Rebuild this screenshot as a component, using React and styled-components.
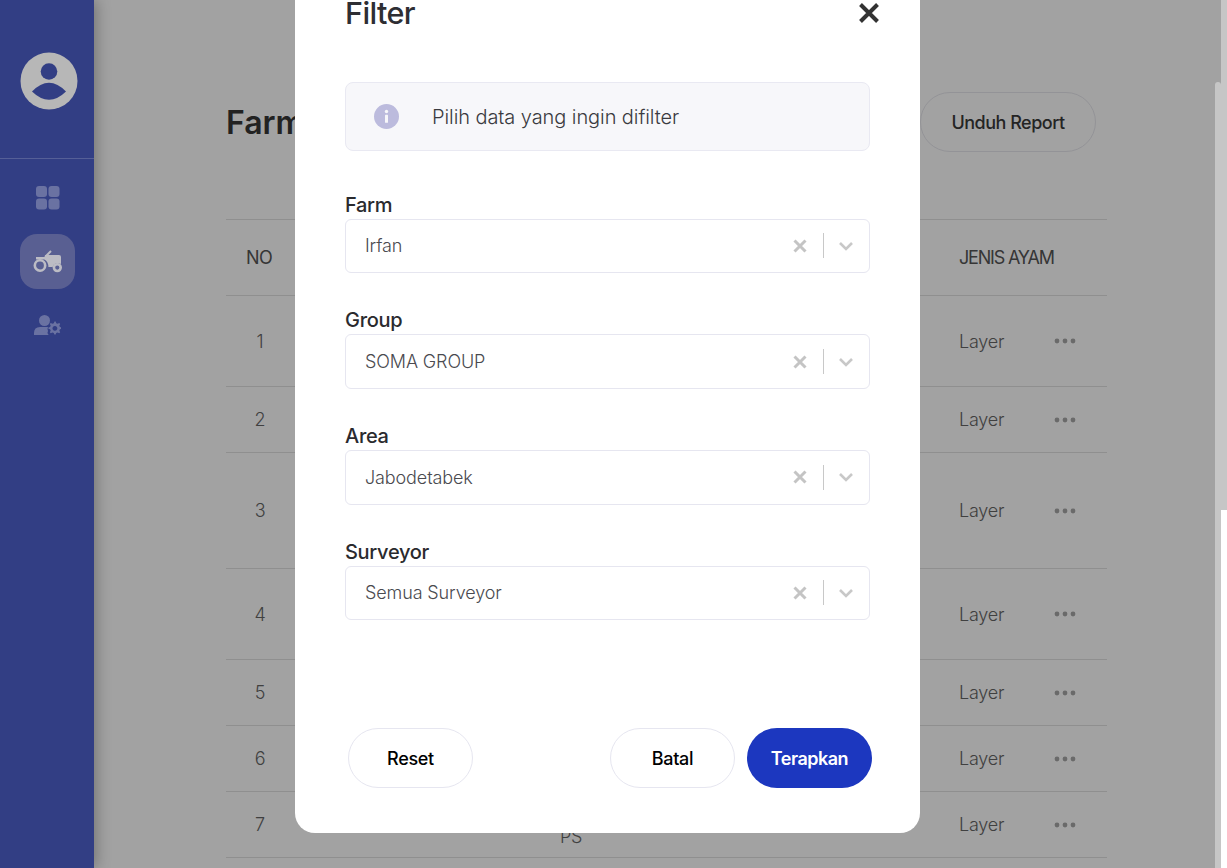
import React from 'react';
import styled, { createGlobalStyle } from 'styled-components';

const FONT = "Inter, 'Noto Sans', sans-serif";

const GlobalStyle = createGlobalStyle`
  html, body {
    margin: 0;
    height: 100%;
    overflow: hidden;
    background: #fff;
    font-family: ${FONT};
  }
  * { box-sizing: border-box; }
`;

const Page = styled.div`
  display: flex;
  height: 868px;
  overflow: hidden;
`;

const Sidebar = styled.aside`
  position: relative;
  z-index: 3;
  flex: 0 0 94px;
  background: #323e84;
  box-shadow: 2px 0 14px rgba(0, 0, 0, 0.3);
`;

const SideTop = styled.div`
  height: 159px;
  padding: 52px 0 0 4px;
  display: flex;
  justify-content: center;
  border-bottom: 1px solid #555f97;
`;

const SideNav = styled.nav`
  display: flex;
  flex-direction: column;
  align-items: center;
  padding-top: 11px;
  gap: 9px;
`;

const NavItem = styled.div`
  width: 55px;
  height: 55px;
  margin-left: 1px;
  border-radius: 17px;
  display: flex;
  align-items: center;
  justify-content: center;
  background: ${(p) => (p.$active ? '#595f92' : 'transparent')};
`;

const Main = styled.main`
  flex: 1;
  padding: 92px 120px 0 132px;
`;

const Head = styled.div`
  display: flex;
  align-items: center;
  justify-content: space-between;
  padding-right: 11px;
  margin-bottom: 67px;
`;

const Title = styled.h1`
  margin: 0;
  font-size: 32px;
  font-weight: 600;
  color: #363636;
`;

const ReportButton = styled.button`
  width: 176px;
  height: 60px;
  border-radius: 30px;
  border: 1px solid #e8e8ee;
  background: transparent;
  font-family: ${FONT};
  font-size: 18px;
  font-weight: 500;
  letter-spacing: -0.5px;
  color: #3a3a3a;
`;

const Table = styled.div`
  border-top: 1px solid #e2e2e2;
`;

const Row = styled.div`
  display: grid;
  grid-template-columns: 314px 399px 95px 1fr;
  align-items: center;
  height: ${(p) => p.$height}px;
  padding-left: 20px;
  border-bottom: 1px solid #e2e2e2;
  font-size: 18px;
  font-weight: 300;
  letter-spacing: -0.2px;
  color: #666;
`;

const HeadCell = styled.div`
  font-size: 18px;
  font-weight: 400;
  letter-spacing: ${(p) => (p.$tight ? '-1.2px' : '-0.5px')};
  color: #555;
  white-space: nowrap;
`;

const Cell = styled.div`
  padding-top: ${(p) => p.$lineOffset || 0}px;
`;

const NumberCell = styled.div`
  width: 28px;
  text-align: center;
`;

const ActionCell = styled.div`
  display: flex;
  align-items: center;
`;

const Backdrop = styled.div`
  position: fixed;
  top: 0;
  left: 0;
  right: 6px;
  bottom: 0;
  z-index: 2;
  background: rgba(0, 0, 0, 0.365);
`;

const Modal = styled.div`
  position: fixed;
  z-index: 4;
  top: -40px;
  left: 295px;
  width: 625px;
  height: 873px;
  padding: 33px 50px 45px;
  display: flex;
  flex-direction: column;
  background: #fff;
  border-radius: 20px;
`;

const ModalHead = styled.div`
  display: flex;
  align-items: center;
  justify-content: space-between;
  height: 40px;
  margin-bottom: 49px;
`;

const ModalTitle = styled.h2`
  margin: 0;
  font-size: 30.5px;
  line-height: 26px;
  font-weight: 500;
  letter-spacing: -0.6px;
  color: #2e2e33;
`;

const CloseIcon = styled.svg`
  width: 22px;
  height: 22px;
  margin-right: -10px;
`;

const InfoBox = styled.div`
  display: flex;
  align-items: center;
  height: 69px;
  padding-left: 28px;
  gap: 33px;
  margin-bottom: 41.6px;
  background: #f7f7fa;
  border: 1px solid #e9e9f2;
  border-radius: 8px;
  font-size: 20px;
  font-weight: 300;
  letter-spacing: -0.08px;
  color: #3a3a40;
`;

const Fields = styled.div`
  display: flex;
  flex-direction: column;
  gap: 35.1px;
`;

const Field = styled.div`
  display: flex;
  flex-direction: column;
  gap: 2px;
`;

const Label = styled.label`
  font-size: 20px;
  line-height: 24px;
  font-weight: 500;
  letter-spacing: -0.3px;
  color: #2a2a2e;
`;

const Select = styled.div`
  display: flex;
  align-items: center;
  height: 54.6px;
  padding: 0 15px 0 19px;
  border: 1px solid #e6e6f0;
  border-radius: 6px;
  font-size: 18px;
  font-weight: 300;
  letter-spacing: -0.12px;
  color: #4a4a4f;
`;

const SelectValue = styled.span`
  flex: 1;
`;

const Divider = styled.span`
  width: 1px;
  height: 25px;
  margin: 0 14px 0 16px;
  background: #c8c8c8;
`;

const Footer = styled.div`
  display: flex;
  gap: 12px;
  margin: auto -2px 0 3px;
`;

const PillButton = styled.button`
  width: 125px;
  height: 60px;
  border-radius: 30px;
  border: ${(p) => (p.$primary ? 'none' : '1px solid #e6e6f0')};
  background: ${(p) => (p.$primary ? '#1c37bf' : '#fff')};
  color: ${(p) => (p.$primary ? '#fff' : '#000')};
  font-family: ${FONT};
  font-size: 18px;
  font-weight: ${(p) => (p.$primary ? 600 : 500)};
  letter-spacing: ${(p) => (p.$primary ? '-0.5px' : '-0.3px')};
  margin-right: ${(p) => (p.$spread ? 'auto' : 0)};
`;

const ScrollOuter = styled.div`
  position: fixed;
  z-index: 3;
  top: 0;
  right: 0;
  width: 6px;
  height: 510px;
  background: #c6c6c6;
`;

const ScrollInner = styled.div`
  position: fixed;
  z-index: 3;
  top: 82px;
  right: 6px;
  bottom: 0;
  width: 6px;
  border-radius: 3px 3px 0 0;
  background: #c6c6c6;
`;

const Avatar = () => (
  <svg width="58" height="58" viewBox="0 0 58 58">
    <circle cx="29" cy="29" r="28.5" fill="#b7b7b7" />
    <circle cx="29" cy="19.5" r="8.3" fill="#323e84" />
    <path d="M12 39.5Q29 22 46 39.5Q29 56 12 39.5Z" fill="#323e84" />
  </svg>
);

const GridIcon = () => (
  <svg width="24" height="24" viewBox="0 0 24 24" fill="#6a72a2">
    <rect x="0" y="0" width="11" height="11" rx="3" />
    <rect x="12.5" y="0" width="11" height="11" rx="3" />
    <rect x="0" y="12.5" width="11" height="11" rx="3" />
    <rect x="12.5" y="12.5" width="11" height="11" rx="3" />
  </svg>
);

const TractorIcon = () => (
  <svg width="30" height="24" viewBox="0 0 30 24" fill="#bcbcc4">
    <path d="M12 5H26Q28 5 28 7V14Q25 12.6 22.5 13.6Q20 15 19.6 17H15.4Q15.4 12 11.4 9.6H3V7H12Z" />
    <path d="M12 7L18 1" stroke="#bcbcc4" strokeWidth="2" fill="none" />
    <circle cx="7" cy="15.5" r="5.2" fill="none" stroke="#bcbcc4" strokeWidth="2.6" />
    <circle cx="24.3" cy="17.6" r="3.4" fill="none" stroke="#bcbcc4" strokeWidth="2.6" />
  </svg>
);

const UserGearIcon = () => (
  <svg width="27" height="21" viewBox="0 0 27 21" fill="#6a72a2">
    <circle cx="10.5" cy="5.5" r="5.5" />
    <path d="M0 20V18Q0 12 6 12H14Q13 14 14 16Q12.6 18 14.6 20Z" />
    <path d="M20.5 8.4l1.2 0 .5 1.8 1.4.6 1.6-.9 1 1-.9 1.6.6 1.4 1.6.5v1.4l-1.6.5-.6 1.4.9 1.6-1 1-1.6-.9-1.4.6-.5 1.6h-1.4l-.5-1.6-1.4-.6-1.6.9-1-1 .9-1.6-.6-1.4-1.7-.5v-1.4l1.7-.5.6-1.4-.9-1.6 1-1 1.6.9 1.4-.6zM20.9 13a2.4 2.4 0 1 0 .01 0z" fillRule="evenodd" transform="translate(0 -2)" />
  </svg>
);

const MoreDots = () => (
  <svg width="22" height="6" viewBox="0 0 22 6" fill="#a8a8a8">
    <circle cx="3" cy="3" r="2.4" />
    <circle cx="11" cy="3" r="2.4" />
    <circle cx="19" cy="3" r="2.4" />
  </svg>
);

const InfoIcon = () => (
  <svg width="25" height="25" viewBox="0 0 25 25">
    <circle cx="12.5" cy="12.5" r="12.5" fill="#bcbbdd" />
    <circle cx="12.5" cy="7.5" r="1.7" fill="#f7f7fa" />
    <rect x="11" y="10.8" width="3" height="8" rx="0.6" fill="#f7f7fa" />
  </svg>
);

const ClearIcon = () => (
  <svg width="14" height="14" viewBox="0 0 14 14">
    <path d="M1.5 1.5L12.5 12.5M12.5 1.5L1.5 12.5" stroke="#c4c4c4" strokeWidth="3" />
  </svg>
);

const ChevronIcon = () => (
  <svg width="16" height="10" viewBox="0 0 16 10">
    <path d="M2 2L8 8L14 2" fill="none" stroke="#c8c8c8" strokeWidth="2.6" />
  </svg>
);

const rows = [
  { no: 1, height: 91 },
  { no: 2, height: 66 },
  { no: 3, height: 116 },
  { no: 4, height: 91 },
  { no: 5, height: 66 },
  { no: 6, height: 66 },
  { no: 7, height: 66, extra: 'PS' },
];

const fields = [
  { label: 'Farm', value: 'Irfan' },
  { label: 'Group', value: 'SOMA GROUP' },
  { label: 'Area', value: 'Jabodetabek' },
  { label: 'Surveyor', value: 'Semua Surveyor' },
];

export default function App() {
  return (
    <>
      <GlobalStyle />
      <Page>
        <Sidebar>
          <SideTop>
            <Avatar />
          </SideTop>
          <SideNav>
            <NavItem>
              <GridIcon />
            </NavItem>
            <NavItem $active>
              <TractorIcon />
            </NavItem>
            <NavItem>
              <UserGearIcon />
            </NavItem>
          </SideNav>
        </Sidebar>
        <Main>
          <Head>
            <Title>Farm</Title>
            <ReportButton>Unduh Report</ReportButton>
          </Head>
          <Table>
            <Row $height={76}>
              <HeadCell>NO</HeadCell>
              <HeadCell />
              <HeadCell $tight>JENIS AYAM</HeadCell>
              <HeadCell />
            </Row>
            {rows.map((r) => (
              <Row key={r.no} $height={r.height}>
                <NumberCell>{r.no}</NumberCell>
                <Cell $lineOffset={r.extra ? 24 : 0}>{r.extra}</Cell>
                <Cell>Layer</Cell>
                <ActionCell>
                  <MoreDots />
                </ActionCell>
              </Row>
            ))}
          </Table>
        </Main>
      </Page>
      <Backdrop />
      <ScrollOuter />
      <ScrollInner />
      <Modal>
        <ModalHead>
          <ModalTitle>Filter</ModalTitle>
          <CloseIcon viewBox="0 0 22 22">
            <path d="M2.5 2.5L19.5 19.5M19.5 2.5L2.5 19.5" stroke="#333" strokeWidth="4" />
          </CloseIcon>
        </ModalHead>
        <InfoBox>
          <InfoIcon />
          Pilih data yang ingin difilter
        </InfoBox>
        <Fields>
          {fields.map((f) => (
            <Field key={f.label}>
              <Label>{f.label}</Label>
              <Select>
                <SelectValue>{f.value}</SelectValue>
                <ClearIcon />
                <Divider />
                <ChevronIcon />
              </Select>
            </Field>
          ))}
        </Fields>
        <Footer>
          <PillButton $spread>Reset</PillButton>
          <PillButton>Batal</PillButton>
          <PillButton $primary>Terapkan</PillButton>
        </Footer>
      </Modal>
    </>
  );
}
